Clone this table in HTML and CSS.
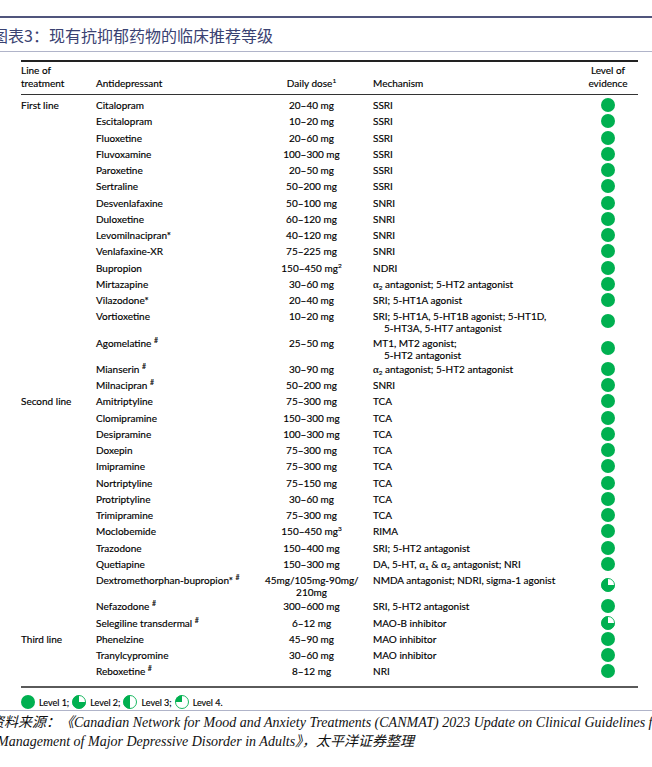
FILE: index.html
```html
<!DOCTYPE html>
<html lang="zh">
<head>
<meta charset="utf-8">
<link rel="stylesheet" href="styles.css">
</head>
<body>
<svg class="defs" width="0" height="0" aria-hidden="true">
  <symbol id="l1" viewBox="0 0 14 14"><circle cx="7" cy="7" r="7" fill="#00b050"/></symbol>
  <symbol id="l2" viewBox="0 0 14 14"><circle cx="7" cy="7" r="6.5" fill="#fff" stroke="#00b050" stroke-width="0.9"/><path d="M7,7 L7,0.2 A6.8,6.8 0 1,0 13.8,7 Z" fill="#00b050"/></symbol>
  <symbol id="l3" viewBox="0 0 14 14"><circle cx="7" cy="7" r="6.5" fill="#fff" stroke="#00b050" stroke-width="0.9"/><path d="M7,0.2 A6.8,6.8 0 0,0 7,13.8 Z" fill="#00b050"/></symbol>
  <symbol id="l4" viewBox="0 0 14 14"><circle cx="7" cy="7" r="6.5" fill="#fff" stroke="#00b050" stroke-width="0.9"/><path d="M7,7 L7,0.2 A6.8,6.8 0 0,0 0.2,7 Z" fill="#00b050"/></symbol>
</svg>

<div class="topline"></div>
<div class="title">图表3：现有抗抑郁药物的临床推荐等级</div>
<div class="thin"></div>

<div class="tbl">
  <div class="head">
    <div>Line of<br>treatment</div>
    <div>Antidepressant</div>
    <div class="dose">Daily dose<sup>1</sup></div>
    <div class="mech">Mechanism</div>
    <div class="levh">Level of<br>evidence</div>
  </div>
  <div class="body">
    <div class="row"><div>First line</div><div>Citalopram</div><div class="dose">20–40 mg</div><div class="mech">SSRI</div><div class="lev"><svg><use href="#l1"/></svg></div></div>
    <div class="row"><div></div><div>Escitalopram</div><div class="dose">10–20 mg</div><div class="mech">SSRI</div><div class="lev"><svg><use href="#l1"/></svg></div></div>
    <div class="row"><div></div><div>Fluoxetine</div><div class="dose">20–60 mg</div><div class="mech">SSRI</div><div class="lev"><svg><use href="#l1"/></svg></div></div>
    <div class="row"><div></div><div>Fluvoxamine</div><div class="dose">100–300 mg</div><div class="mech">SSRI</div><div class="lev"><svg><use href="#l1"/></svg></div></div>
    <div class="row"><div></div><div>Paroxetine</div><div class="dose">20–50 mg</div><div class="mech">SSRI</div><div class="lev"><svg><use href="#l1"/></svg></div></div>
    <div class="row"><div></div><div>Sertraline</div><div class="dose">50–200 mg</div><div class="mech">SSRI</div><div class="lev"><svg><use href="#l1"/></svg></div></div>
    <div class="row"><div></div><div>Desvenlafaxine</div><div class="dose">50–100 mg</div><div class="mech">SNRI</div><div class="lev"><svg><use href="#l1"/></svg></div></div>
    <div class="row"><div></div><div>Duloxetine</div><div class="dose">60–120 mg</div><div class="mech">SNRI</div><div class="lev"><svg><use href="#l1"/></svg></div></div>
    <div class="row"><div></div><div>Levomilnacipran*</div><div class="dose">40–120 mg</div><div class="mech">SNRI</div><div class="lev"><svg><use href="#l1"/></svg></div></div>
    <div class="row"><div></div><div>Venlafaxine-XR</div><div class="dose">75–225 mg</div><div class="mech">SNRI</div><div class="lev"><svg><use href="#l1"/></svg></div></div>
    <div class="row"><div></div><div>Bupropion</div><div class="dose">150–450 mg<sup>2</sup></div><div class="mech">NDRI</div><div class="lev"><svg><use href="#l1"/></svg></div></div>
    <div class="row"><div></div><div>Mirtazapine</div><div class="dose">30–60 mg</div><div class="mech"><span class="gr">α</span><sub>2</sub> antagonist; 5-HT2 antagonist</div><div class="lev"><svg><use href="#l1"/></svg></div></div>
    <div class="row"><div></div><div>Vilazodone*</div><div class="dose">20–40 mg</div><div class="mech">SRI; 5-HT1A agonist</div><div class="lev"><svg><use href="#l1"/></svg></div></div>
    <div class="row two"><div></div><div>Vortioxetine</div><div class="dose">10–20 mg</div><div class="mech hang">SRI; 5-HT1A, 5-HT1B agonist; 5-HT1D,<br>5-HT3A, 5-HT7 antagonist</div><div class="lev"><svg><use href="#l1"/></svg></div></div>
    <div class="row two"><div></div><div>Agomelatine <sup class="h">#</sup></div><div class="dose">25–50 mg</div><div class="mech hang">MT1, MT2 agonist;<br>5-HT2 antagonist</div><div class="lev"><svg><use href="#l1"/></svg></div></div>
    <div class="row"><div></div><div>Mianserin <sup class="h">#</sup></div><div class="dose">30–90 mg</div><div class="mech"><span class="gr">α</span><sub>2</sub> antagonist; 5-HT2 antagonist</div><div class="lev"><svg><use href="#l1"/></svg></div></div>
    <div class="row"><div></div><div>Milnacipran <sup class="h">#</sup></div><div class="dose">50–200 mg</div><div class="mech">SNRI</div><div class="lev"><svg><use href="#l1"/></svg></div></div>
    <div class="row"><div>Second line</div><div>Amitriptyline</div><div class="dose">75–300 mg</div><div class="mech">TCA</div><div class="lev"><svg><use href="#l1"/></svg></div></div>
    <div class="row"><div></div><div>Clomipramine</div><div class="dose">150–300 mg</div><div class="mech">TCA</div><div class="lev"><svg><use href="#l1"/></svg></div></div>
    <div class="row"><div></div><div>Desipramine</div><div class="dose">100–300 mg</div><div class="mech">TCA</div><div class="lev"><svg><use href="#l1"/></svg></div></div>
    <div class="row"><div></div><div>Doxepin</div><div class="dose">75–300 mg</div><div class="mech">TCA</div><div class="lev"><svg><use href="#l1"/></svg></div></div>
    <div class="row"><div></div><div>Imipramine</div><div class="dose">75–300 mg</div><div class="mech">TCA</div><div class="lev"><svg><use href="#l1"/></svg></div></div>
    <div class="row"><div></div><div>Nortriptyline</div><div class="dose">75–150 mg</div><div class="mech">TCA</div><div class="lev"><svg><use href="#l1"/></svg></div></div>
    <div class="row"><div></div><div>Protriptyline</div><div class="dose">30–60 mg</div><div class="mech">TCA</div><div class="lev"><svg><use href="#l1"/></svg></div></div>
    <div class="row"><div></div><div>Trimipramine</div><div class="dose">75–300 mg</div><div class="mech">TCA</div><div class="lev"><svg><use href="#l1"/></svg></div></div>
    <div class="row"><div></div><div>Moclobemide</div><div class="dose">150–450 mg<sup>3</sup></div><div class="mech">RIMA</div><div class="lev"><svg><use href="#l1"/></svg></div></div>
    <div class="row"><div></div><div>Trazodone</div><div class="dose">150–400 mg</div><div class="mech">SRI; 5-HT2 antagonist</div><div class="lev"><svg><use href="#l1"/></svg></div></div>
    <div class="row"><div></div><div>Quetiapine</div><div class="dose">150–300 mg</div><div class="mech">DA, 5-HT, <span class="gr">α</span><sub>1</sub> &amp; <span class="gr">α</span><sub>2</sub> antagonist; NRI</div><div class="lev"><svg><use href="#l1"/></svg></div></div>
    <div class="row two"><div></div><div>Dextromethorphan-bupropion* <sup class="h">#</sup></div><div class="dose">45mg/105mg-90mg/<br>210mg</div><div class="mech">NMDA antagonist; NDRI, sigma-1 agonist</div><div class="lev"><svg><use href="#l2"/></svg></div></div>
    <div class="row"><div></div><div>Nefazodone <sup class="h">#</sup></div><div class="dose">300–600 mg</div><div class="mech">SRI, 5-HT2 antagonist</div><div class="lev"><svg><use href="#l1"/></svg></div></div>
    <div class="row"><div></div><div>Selegiline transdermal <sup class="h">#</sup></div><div class="dose">6–12 mg</div><div class="mech">MAO-B inhibitor</div><div class="lev"><svg><use href="#l2"/></svg></div></div>
    <div class="row"><div>Third line</div><div>Phenelzine</div><div class="dose">45–90 mg</div><div class="mech">MAO inhibitor</div><div class="lev"><svg><use href="#l1"/></svg></div></div>
    <div class="row"><div></div><div>Tranylcypromine</div><div class="dose">30–60 mg</div><div class="mech">MAO inhibitor</div><div class="lev"><svg><use href="#l1"/></svg></div></div>
    <div class="row"><div></div><div>Reboxetine <sup class="h">#</sup></div><div class="dose">8–12 mg</div><div class="mech">NRI</div><div class="lev"><svg><use href="#l1"/></svg></div></div>
  </div>
</div>

<div class="legend">
  <svg><use href="#l1"/></svg><span>Level 1;</span>
  <svg><use href="#l2"/></svg><span>Level 2;</span>
  <svg><use href="#l3"/></svg><span>Level 3;</span>
  <svg><use href="#l4"/></svg><span>Level 4.</span>
</div>

<div class="thin"></div>
<div class="source">
  <p>资料来源：《Canadian Network for Mood and Anxiety Treatments (CANMAT) 2023 Update on Clinical Guidelines for</p>
  <p>Management of Major Depressive Disorder in Adults》，太平洋证券整理</p>
</div>
</body>
</html>
```

FILE: styles.css
```css
* { box-sizing: border-box; margin: 0; padding: 0; }

body {
  margin: 0;
  width: 652px;
  height: 767px;
  overflow: hidden;
  background: #fff;
  font-family: Lato, "Noto Sans", sans-serif;
  color: #000;
}

.defs { position: absolute; width: 0; height: 0; overflow: hidden; }

.topline {
  margin-top: 16px;
  height: 2px;
  background: #50557c;
}

.title {
  height: 33px;
  line-height: 34px;
  font-family: "Noto Sans CJK SC", sans-serif;
  font-size: 16px;
  color: #3a4272;
  text-indent: -8px;
  white-space: nowrap;
}

.thin {
  height: 1px;
  background: #b0b4c9;
}

.tbl {
  margin: 8px 0 0 21px;
  width: 617px;
  border-top: 2px solid #222;
}

.head, .row {
  display: grid;
  grid-template-columns: 75px 169px 93px 220px 60px;
  font-size: 10px;
  -webkit-text-stroke: 0.15px #000;
}

.head {
  height: 33px;
  align-items: end;
  line-height: 13px;
  padding-bottom: 4px;
  border-bottom: 1px solid #333;
}

.levh { text-align: center; }

.body {
  padding: 2px 0 6.5px;
  border-bottom: 2px solid #5a5a5a;
}

.row {
  height: 16.25px;
  line-height: 12px;
}

.row > div {
  padding-top: 2px;
  white-space: nowrap;
}

.row.two { height: 26.25px; }

.dose { text-align: center; }

.mech { padding-left: 15px; }

.row > .mech.hang {
  padding-left: 26px;
  text-indent: -11px;
}

.row > .lev {
  padding-top: 0;
  display: flex;
  align-items: center;
  justify-content: center;
}

.lev svg { width: 14px; height: 14px; display: block; }

sup {
  font-size: 6.5px;
  line-height: 0;
  vertical-align: 4px;
}

sup.h { font-size: 7px; }

sub {
  font-size: 6.5px;
  line-height: 0;
  vertical-align: -2px;
}

.gr { font-family: "Liberation Serif", serif; font-size: 11px; }

.legend {
  height: 22px;
  padding: 7px 0 1px 21px;
  display: flex;
  align-items: center;
  font-size: 9px;
  -webkit-text-stroke: 0.15px #000;
}

.legend svg { width: 14px; height: 14px; display: block; margin-right: 4px; }
.legend span { margin-right: 3px; }

.source {
  padding-top: 2px;
  font-family: "Liberation Serif", "Noto Sans CJK SC", serif;
  font-style: italic;
  font-size: 14px;
  line-height: 19px;
  color: #111;
  white-space: nowrap;
}

.source p:first-child { text-indent: -10px; }
.source p:last-child { text-indent: -3px; }
```
